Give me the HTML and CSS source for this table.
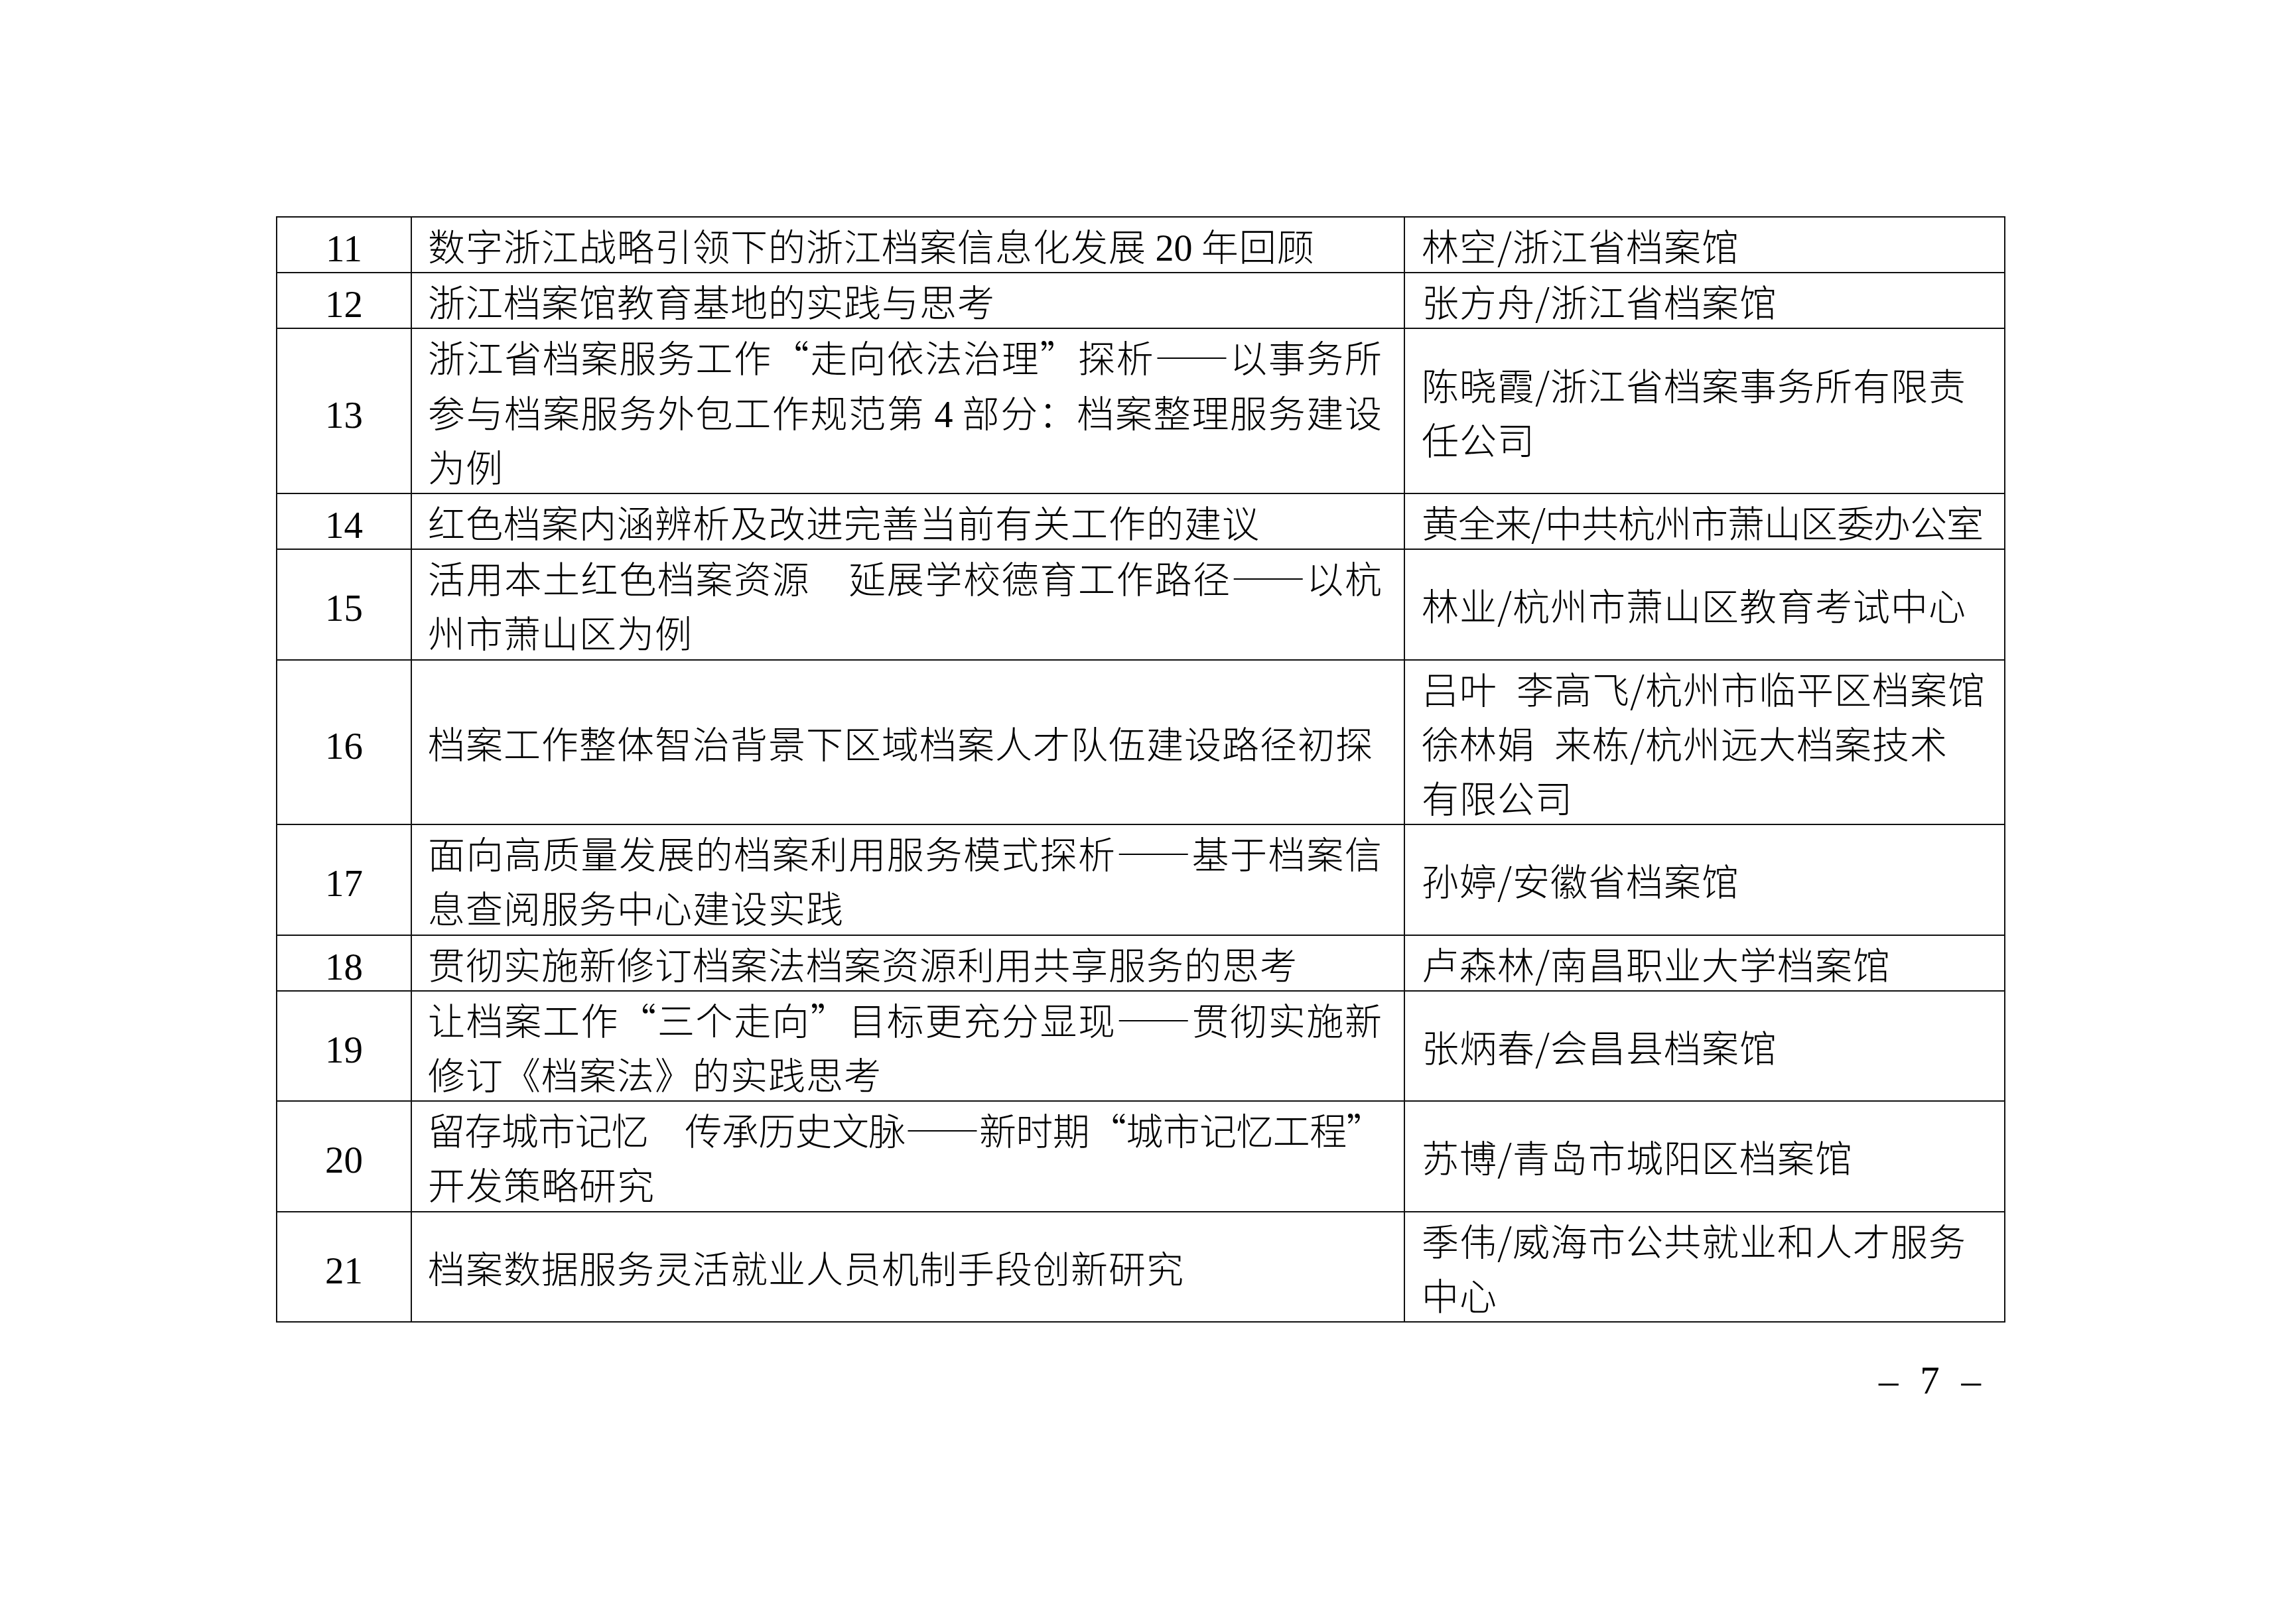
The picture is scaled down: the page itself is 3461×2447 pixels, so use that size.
FILE: index.html
```html
<!DOCTYPE html>
<html lang="zh-CN">
<head>
<meta charset="utf-8">
<title>第7页</title>
<link rel="stylesheet" href="styles.css">
</head>
<body>
<div class="page">
  <table class="list">
    <colgroup>
      <col class="c-no">
      <col class="c-title">
      <col class="c-author">
    </colgroup>
    <tbody>
      <tr>
        <td class="no">11</td>
        <td class="title"><span class="ln">数字浙江战略引领下的浙江档案信息化发展 <span class="lat">20</span> 年回顾</span></td>
        <td class="author"><span class="ln">林空/浙江省档案馆</span></td>
      </tr>
      <tr>
        <td class="no">12</td>
        <td class="title"><span class="ln">浙江档案馆教育基地的实践与思考</span></td>
        <td class="author"><span class="ln">张方舟/浙江省档案馆</span></td>
      </tr>
      <tr>
        <td class="no">13</td>
        <td class="title"><span class="ln full">浙江省档案服务工作“走向依法治理”探析——以事务所</span><span class="ln full">参与档案服务外包工作规范第 <span class="lat">4</span> 部分：档案整理服务建设</span><span class="ln">为例</span></td>
        <td class="author"><span class="ln">陈晓霞/浙江省档案事务所有限责</span><span class="ln">任公司</span></td>
      </tr>
      <tr>
        <td class="no">14</td>
        <td class="title"><span class="ln">红色档案内涵辨析及改进完善当前有关工作的建议</span></td>
        <td class="author"><span class="ln squeeze">黄全来/中共杭州市萧山区委办公室</span></td>
      </tr>
      <tr>
        <td class="no">15</td>
        <td class="title"><span class="ln full">活用本土红色档案资源　延展学校德育工作路径——以杭</span><span class="ln">州市萧山区为例</span></td>
        <td class="author"><span class="ln">林业/杭州市萧山区教育考试中心</span></td>
      </tr>
      <tr>
        <td class="no">16</td>
        <td class="title"><span class="ln">档案工作整体智治背景下区域档案人才队伍建设路径初探</span></td>
        <td class="author"><span class="ln">吕叶&ensp;李高飞/杭州市临平区档案馆</span><span class="ln">徐林娟&ensp;来栋/杭州远大档案技术</span><span class="ln">有限公司</span></td>
      </tr>
      <tr>
        <td class="no">17</td>
        <td class="title"><span class="ln full">面向高质量发展的档案利用服务模式探析——基于档案信</span><span class="ln">息查阅服务中心建设实践</span></td>
        <td class="author"><span class="ln">孙婷/安徽省档案馆</span></td>
      </tr>
      <tr>
        <td class="no">18</td>
        <td class="title"><span class="ln">贯彻实施新修订档案法档案资源利用共享服务的思考</span></td>
        <td class="author"><span class="ln">卢森林/南昌职业大学档案馆</span></td>
      </tr>
      <tr>
        <td class="no">19</td>
        <td class="title"><span class="ln full">让档案工作“三个走向”目标更充分显现——贯彻实施新</span><span class="ln">修订《档案法》的实践思考</span></td>
        <td class="author"><span class="ln">张炳春/会昌县档案馆</span></td>
      </tr>
      <tr>
        <td class="no">20</td>
        <td class="title"><span class="ln full tight">留存城市记忆　传承历史文脉——新时期“城市记忆工程”</span><span class="ln">开发策略研究</span></td>
        <td class="author"><span class="ln">苏博/青岛市城阳区档案馆</span></td>
      </tr>
      <tr>
        <td class="no">21</td>
        <td class="title"><span class="ln">档案数据服务灵活就业人员机制手段创新研究</span></td>
        <td class="author"><span class="ln">季伟/威海市公共就业和人才服务</span><span class="ln">中心</span></td>
      </tr>
    </tbody>
  </table>
  <div class="folio">– 7 –</div>
</div>
</body>
</html>
```

FILE: styles.css
```css
html, body {
  margin: 0;
  padding: 0;
  background: #ffffff;
}

body {
  width: 3461px;
  height: 2447px;
  overflow: hidden;
  color: #000000;
  font-family: "Noto Sans CJK SC", "Noto Sans CJK TC", sans-serif;
}

.page {
  padding: 326px 0 0 416px;
}

.list {
  border-collapse: collapse;
  table-layout: fixed;
  width: 2605px;
}

.c-no { width: 203px; }
.c-title { width: 1497px; }
.c-author { width: 905px; }

.list td {
  border: 2px solid #111111;
  vertical-align: middle;
  font-size: 56px;
  line-height: 82.2px;
  letter-spacing: 1px;
  font-weight: 300;
}

.list td.no {
  text-align: center;
  font-family: "Liberation Serif", "Times New Roman", serif;
  font-size: 57px;
  letter-spacing: 0;
  font-weight: 400;
  line-height: 70px;
  padding: 12px 0 0 0;
}

.list td.title {
  padding: 0 32px 0 24px;
  text-align: left;
}

.list td.author {
  padding: 0 14px 0 25px;
  text-align: left;
}

.ln {
  display: block;
}

.author .ln {
  white-space: nowrap;
}

.ln.full {
  text-align: justify;
  text-align-last: justify;
}

.ln.tight {
  letter-spacing: -1.5px;
}

.ln.squeeze {
  letter-spacing: -1px;
}

.lat {
  font-family: "Liberation Serif", "Times New Roman", serif;
  letter-spacing: 0;
  line-height: 1;
}

.folio {
  width: 2605px;
  box-sizing: border-box;
  margin-top: 58px;
  padding-right: 35px;
  text-align: right;
  font-family: "Liberation Serif", "Times New Roman", serif;
  font-size: 59px;
  line-height: 59px;
  word-spacing: 18px;
}
```
